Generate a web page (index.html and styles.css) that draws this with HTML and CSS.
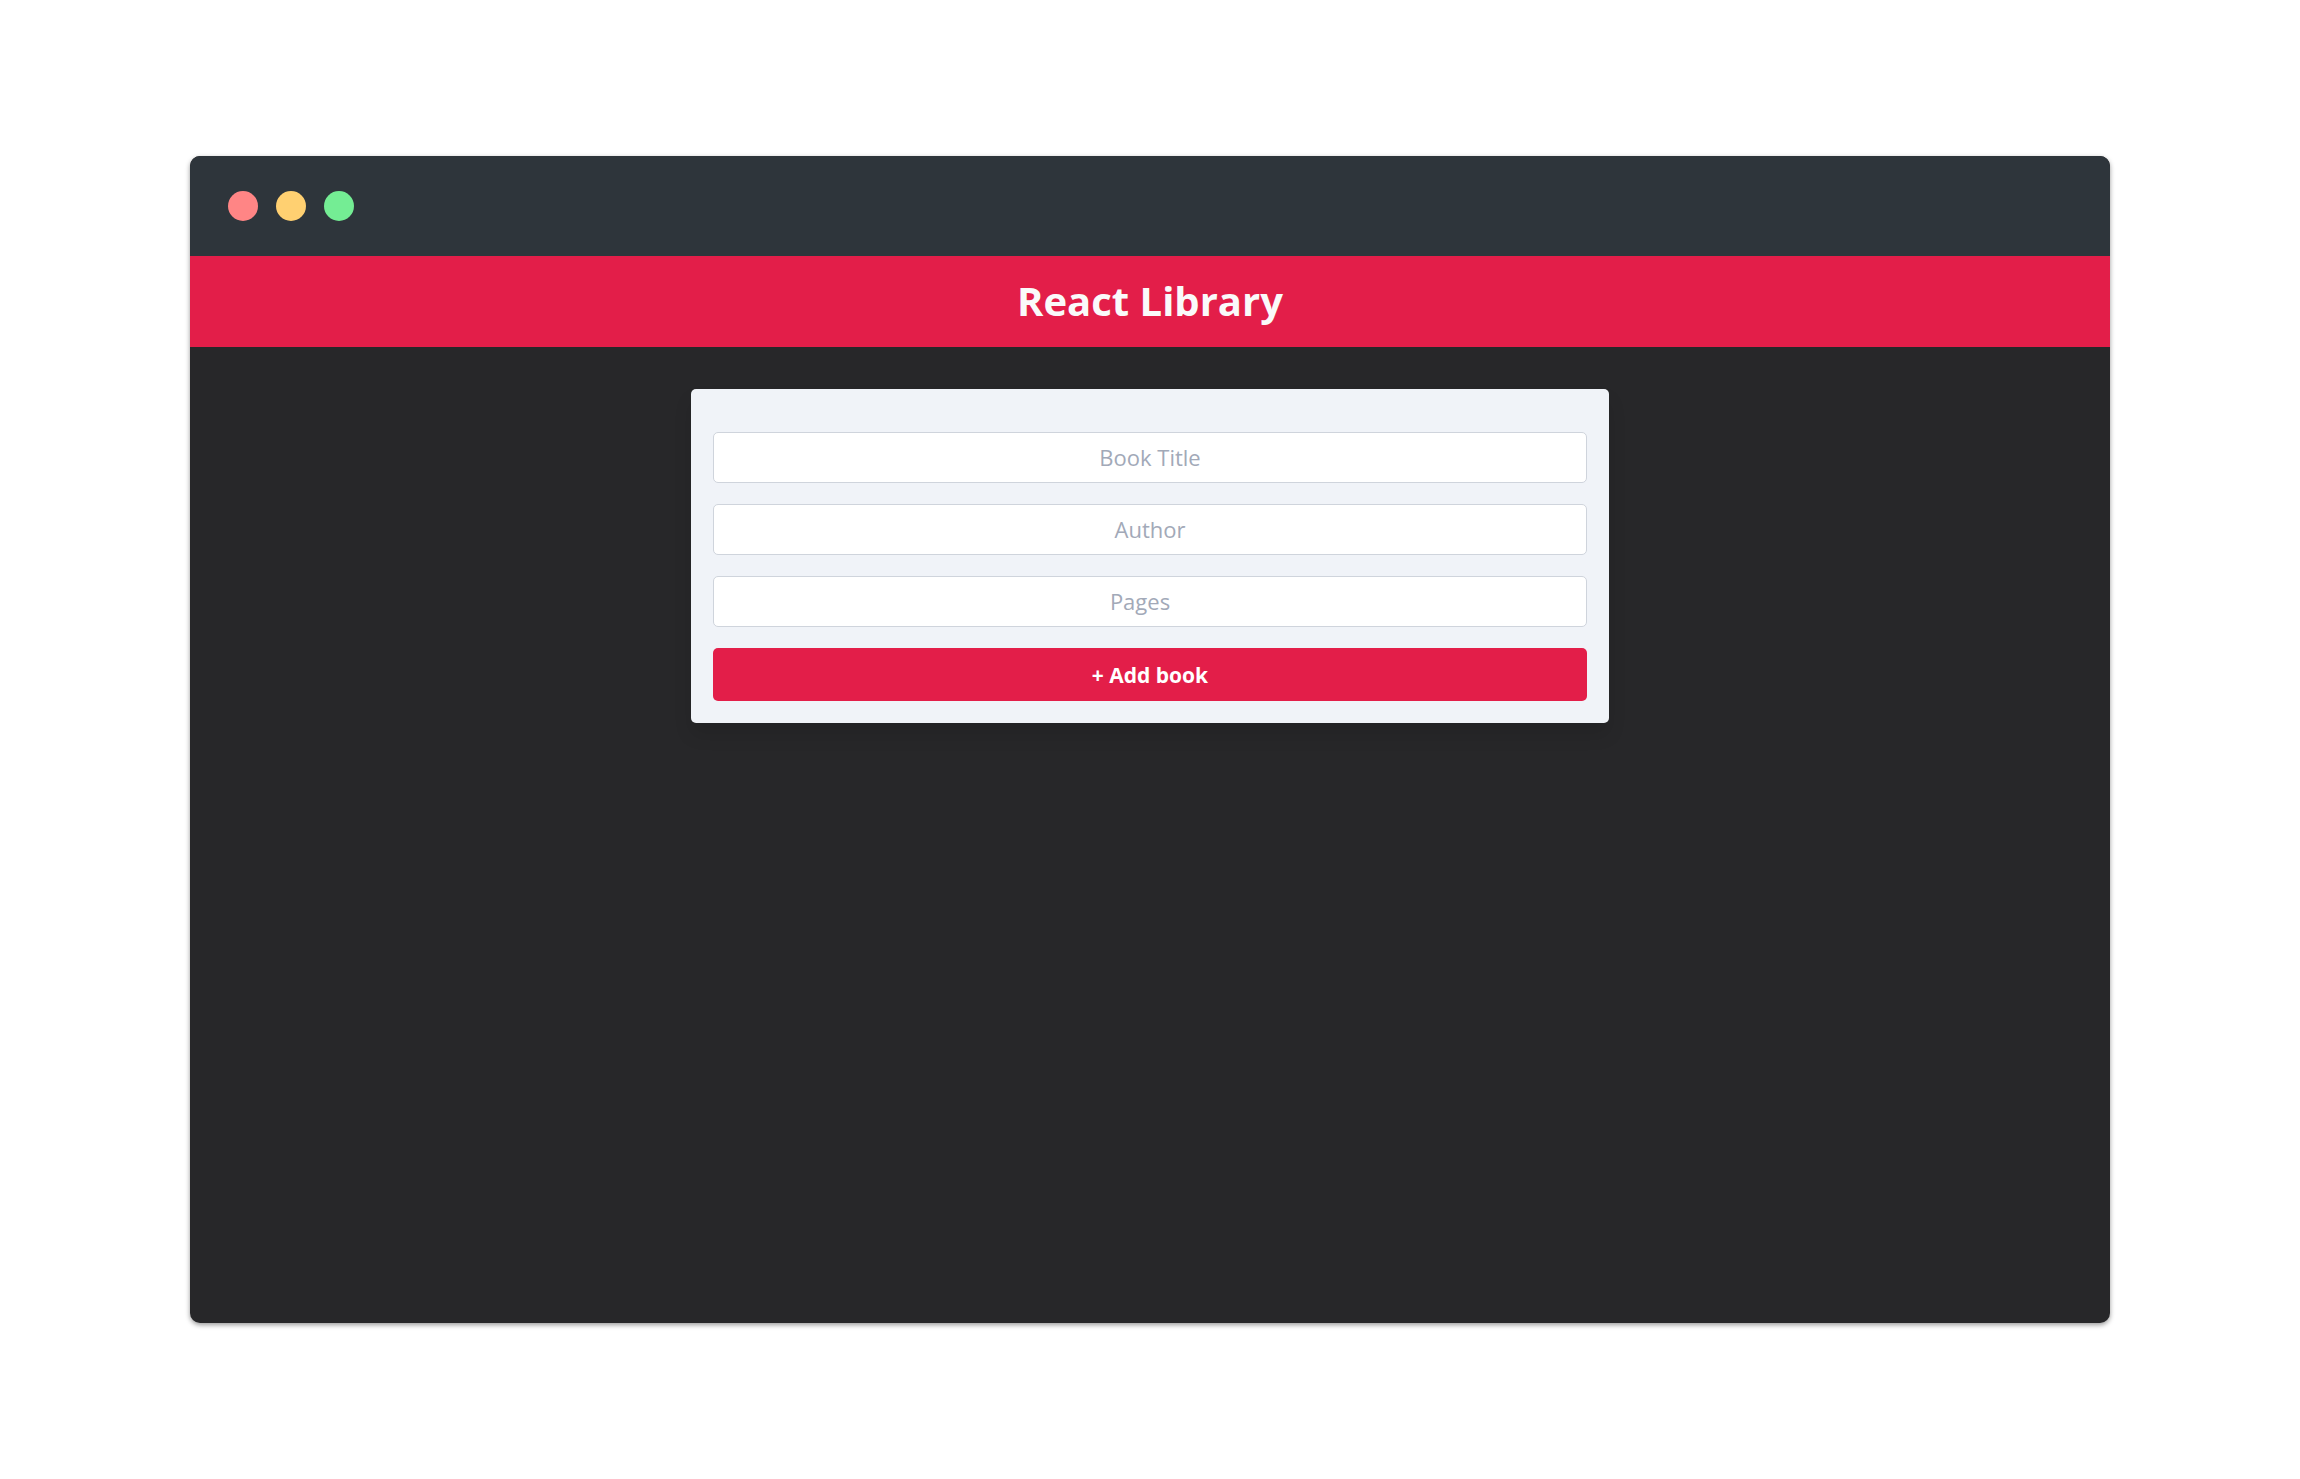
FILE: index.html
```html
<!DOCTYPE html>
<html lang="en">
<head>
  <meta charset="utf-8">
  <meta name="viewport" content="width=device-width, initial-scale=1">
  <title>React Library</title>
  <link rel="stylesheet" href="styles.css">
</head>
<body>
  <div class="window">
    <div class="titlebar">
      <span class="dot dot-close"></span>
      <span class="dot dot-minimize"></span>
      <span class="dot dot-zoom"></span>
    </div>
    <header class="header">
      <h1 class="title">React Library</h1>
    </header>
    <main class="content">
      <form class="book-form">
        <input class="field" type="text" name="title" placeholder="Book Title" aria-label="Book Title">
        <input class="field" type="text" name="author" placeholder="Author" aria-label="Author">
        <input class="field" type="number" name="pages" placeholder="Pages" aria-label="Pages">
        <button class="submit" type="submit">+ Add book</button>
      </form>
    </main>
  </div>
</body>
</html>
```
FILE: styles.css
```css
* {
  box-sizing: border-box;
}

body {
  margin: 0;
  min-height: 100vh;
  padding: 156px 190px;
  display: flex;
  background: #fff;
  font-family: "Open Sans", "Noto Sans", sans-serif;
}

.window {
  flex: 1;
  display: flex;
  flex-direction: column;
  overflow: hidden;
  border-radius: 10px;
  background: #272729;
  box-shadow: 0 2px 5px rgba(0, 0, 0, 0.4);
}

.titlebar {
  display: flex;
  align-items: center;
  gap: 18px;
  padding: 35px 38px;
  background: #2e353b;
}

.dot {
  width: 30px;
  height: 30px;
  border-radius: 50%;
}

.dot-close {
  background: #ff8585;
}

.dot-minimize {
  background: #ffd071;
}

.dot-zoom {
  background: #74ed94;
}

.header {
  padding: 15px 16px 17px;
  background: #e31e49;
}

.title {
  margin: 0;
  color: #fafafa;
  font-size: 40px;
  font-weight: 700;
  line-height: 59px;
  text-align: center;
}

.content {
  padding: 42px 22px;
}

.book-form {
  display: flex;
  flex-direction: column;
  gap: 21px;
  max-width: 918px;
  margin: 0 auto;
  padding: 43px 22px 22px;
  border-radius: 5px;
  background: #f0f3f8;
  box-shadow: 0 12px 18px rgba(0, 0, 0, 0.1);
}

.field,
.submit {
  width: 100%;
  border-radius: 5px;
  font-family: inherit;
  text-align: center;
}

.field {
  height: 51px;
  padding: 0 16px 2px;
  border: 1px solid #cfd4dc;
  background: #fff;
  color: #272729;
  font-size: 22px;
}

.field::placeholder {
  color: #a2a9b8;
  opacity: 1;
}

.field::-webkit-inner-spin-button {
  margin-left: 5px;
}

.submit {
  height: 53px;
  padding: 0 16px;
  border: 0;
  background: #e31e49;
  color: #fff;
  font-size: 21px;
  font-weight: 700;
  cursor: pointer;
}
```
